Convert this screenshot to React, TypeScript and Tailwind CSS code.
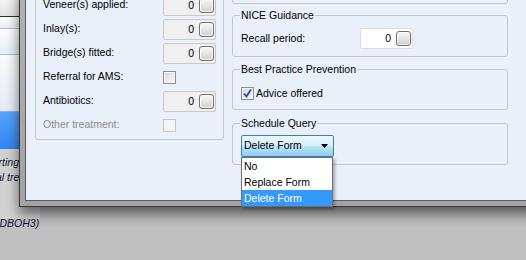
const font = "font-['Liberation_Sans',Arial,sans-serif]";

function SpinBox({ white = false }: { white?: boolean }) {
  return (
    <div
      className={`flex h-[21px] w-[53px] items-center justify-end rounded-[2px] border pr-px ${
        white ? "border-[#dcdcdc] bg-white" : "border-[#c9c9c9] bg-[#f0f0f0]"
      }`}
    >
      <span className="leading-none text-black">0</span>
      <div className="ml-[5px] h-[15px] w-[15px] rounded-[3px] border border-[#707070] bg-gradient-to-b from-[#f8f8f8] to-[#cfcfcf] shadow-[inset_0_0_0_1px_rgba(255,255,255,0.7)]" />
    </div>
  );
}

function CheckBox({ checked = false, disabled = false }: { checked?: boolean; disabled?: boolean }) {
  return (
    <div
      className={`relative h-[13px] w-[13px] border ${
        disabled
          ? "border-[#c6c6c6] bg-[#f4f4f4]"
          : "border-[#8e8f8f] bg-gradient-to-br from-[#d8d8d8] to-[#f9f9f9] shadow-[inset_0_0_0_1px_#f4f4f4]"
      }`}
    >
      {checked && (
        <svg className="absolute left-0 top-0" width="11" height="11" viewBox="0 0 11 11">
          <path d="M2 5.5 L4.5 8.5 L9 1.5" fill="none" stroke="#2c4ea8" strokeWidth="1.9" />
        </svg>
      )}
    </div>
  );
}

function Row({ label, children, disabled = false }: { label: string; children: React.ReactNode; disabled?: boolean }) {
  return (
    <div className="flex h-[24px] items-center">
      <span className={`w-[120px] ${disabled ? "text-[#8d8d8d]" : "text-black"}`}>{label}</span>
      {children}
    </div>
  );
}

function Group({ title, className, children }: { title: string; className?: string; children: React.ReactNode }) {
  return (
    <fieldset className={`w-[276px] rounded-[3px] border border-[#c5c5c5] pl-[7px] pb-[7px] ${className ?? ""}`}>
      <legend className="px-px leading-[14px] text-black">{title}</legend>
      {children}
    </fieldset>
  );
}

export default function App() {
  const options = ["No", "Replace Form", "Delete Form"];
  return (
    <div className={`relative h-[260px] w-[526px] overflow-hidden bg-[#c0c0c0] text-[10.5px] ${font}`}>
      {/* application behind the dialog */}
      <div className="absolute left-0 top-0 flex w-[40px] flex-col">
        <div className="h-[16px] bg-gradient-to-b from-[#f6f6f6] to-[#e2e2e2]" />
        <div className="h-px bg-[#2e2e2e]" />
        <div className="h-[11px] bg-gradient-to-b from-[#fdfdfd] to-[#eeeeee]" />
        <div className="h-px bg-[#9fc0ea]" />
        <div className="h-[25px] bg-gradient-to-b from-[#ffffff] to-[#e6edf6]" />
        <div className="h-px bg-[#9fc0ea]" />
        <div className="h-[56px] bg-gradient-to-b from-[#fbfbfb] to-[#e4ebf5]" />
        <div className="h-px bg-[#8ab2e6]" />
        <div className="h-[37px] bg-gradient-to-b from-[#58a4fa] to-[#2f86f3]" />
        <div className="h-[70px] bg-[#d2d2d2] pt-[6px] italic leading-[15px] text-[#141432]">
          <div className="flex w-[19px] justify-end overflow-hidden whitespace-nowrap">Reporting</div>
          <div className="ml-[-4px] whitespace-nowrap">al treatment</div>
        </div>
        <div className="mt-[-3px] italic leading-[15px] text-[#141432]">
          <div className="ml-[-4px] whitespace-nowrap">(DBOH3)</div>
        </div>
      </div>

      {/* dialog */}
      <div className="absolute left-[19px] top-[-40px] h-[247px] w-[560px] bg-[#3a3a3a] pb-px pl-px shadow-[0_7px_12px_rgba(0,0,0,0.55)]">
        <div className="h-full bg-gradient-to-b from-[#b4b4b4] to-[#a2a2a2] pb-[5px] pl-[5px]">
          <div className="flex h-full gap-[8px] border-b border-l border-[#5a5a5a] bg-[#e9f0fa] pl-[9px]">
            {/* left group */}
            <div className="mt-[10px] h-[170px] w-[189px] rounded-[3px] border border-[#c5c5c5] px-[7px] pt-[22px] pb-[2px]">
              <Row label="Veneer(s) applied:">
                <SpinBox />
              </Row>
              <Row label="Inlay(s):">
                <SpinBox />
              </Row>
              <Row label="Bridge(s) fitted:">
                <SpinBox />
              </Row>
              <Row label="Referral for AMS:">
                <CheckBox />
              </Row>
              <Row label="Antibiotics:">
                <SpinBox />
              </Row>
              <Row label="Other treatment:" disabled>
                <CheckBox disabled />
              </Row>
            </div>

            {/* right column */}
            <div className="flex flex-col">
              <div className="mt-[10px] h-[34px] w-[276px] rounded-[3px] border border-[#c5c5c5]" />

              <Group title="NICE Guidance" className="mt-[4px]">
                <div className="ml-px mt-[6px] flex items-center">
                  <span className="w-[119px]">Recall period:</span>
                  <SpinBox white />
                </div>
              </Group>

              <Group title="Best Practice Prevention" className="mt-[5px]">
                <div className="ml-px mt-[9px] flex h-[17px] items-center gap-[2px]">
                  <CheckBox checked />
                  <span>Advice offered</span>
                </div>
              </Group>

              <Group title="Schedule Query" className="mt-[6px]">
                <div className="relative ml-px mt-[5px] w-[93px]">
                  <div className="flex h-[22px] items-center justify-between rounded-[2px] border border-[#3c7fb1] bg-[linear-gradient(#eef8fe_0%,#d9f0fc_48%,#bde4f9_52%,#8ecdef_100%)] pl-[2px] pr-[5px]">
                    <span>Delete Form</span>
                    <svg width="7" height="4" viewBox="0 0 7 4">
                      <path d="M0 0 H7 L3.5 4 Z" fill="#000" />
                    </svg>
                  </div>
                  <div className="absolute left-0 top-[22px] z-10 w-[92px] border border-[#6d6d6d] bg-white shadow-[2px_2px_3px_rgba(0,0,0,0.3)]">
                    {options.map((o) => (
                      <div
                        key={o}
                        className={`h-[16px] px-[2px] leading-[16px] ${
                          o === "Delete Form" ? "bg-[#3399ff] text-white" : "text-black"
                        }`}
                      >
                        {o}
                      </div>
                    ))}
                  </div>
                </div>
              </Group>
            </div>
          </div>
        </div>
      </div>
    </div>
  );
}
